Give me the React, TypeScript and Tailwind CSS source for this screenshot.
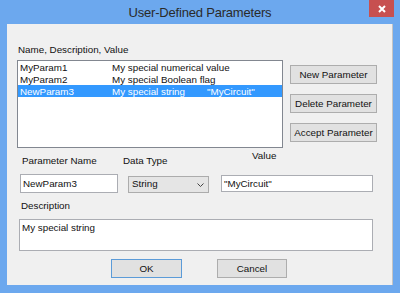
import React from 'react';

const rows = [
  { name: 'MyParam1', desc: 'My special numerical value', value: '' },
  { name: 'MyParam2', desc: 'My special Boolean flag', value: '' },
  { name: 'NewParam3', desc: 'My special string', value: '"MyCircuit"' },
];

const Btn: React.FC<{ label: string; className?: string }> = ({ label, className }) => (
  <button
    className={`h-[19px] border bg-[#e1e1e1] text-[9.8px] text-[#111] leading-none flex items-center justify-center ${className ?? 'border-[#adadad]'}`}
  >
    {label}
  </button>
);

const App: React.FC = () => {
  return (
    <div className="w-[400px] h-[293px] bg-[#6ca8ee] flex flex-col font-['Liberation_Sans',Arial,sans-serif] text-[9.8px] text-[#111] overflow-hidden">
      {/* Title bar */}
      <div className="h-[24px] grid grid-cols-[1fr_auto_1fr] items-start">
        <div />
        <div className="text-[13px] leading-[25px] text-[#2a2a2a] tracking-[-0.2px]">User-Defined Parameters</div>
        <div className="justify-self-end mr-[6px] w-[25px] h-[17px] bg-[#c75050] flex items-center justify-center">
          <svg width="8" height="8" viewBox="0 0 8 8">
            <path d="M1 1 L7 7 M7 1 L1 7" stroke="#fff" strokeWidth="2" />
          </svg>
        </div>
      </div>

      {/* Client area */}
      <div className="mx-[7px] mb-[8px] flex-1 bg-[#f0f0f0] border-r border-[#c4c4c4] flex flex-col">
        <div className="ml-[11px] mt-[20px] h-[12px] leading-[12px]">Name, Description, Value</div>

        <div className="flex mt-[4px] ml-[10px]">
          <div className="w-[266px] h-[88px] bg-white border border-[#828790] pt-[0px]">
            {rows.map((r, i) => (
              <div
                key={r.name}
                className={`h-[12px] leading-[13px] flex whitespace-nowrap ${i === 2 ? 'bg-[#3399ff] text-white' : ''}`}
              >
                <span className="w-[94px] pl-[2px] shrink-0">{r.name}</span>
                <span className="w-[95px] shrink-0">{r.desc}</span>
                <span>{r.value}</span>
              </div>
            ))}
          </div>
          <div className="ml-[7px] mt-[5px] flex flex-col gap-[10px] w-[87px]">
            <Btn label="New Parameter" />
            <Btn label="Delete Parameter" />
            <Btn label="Accept Parameter" />
          </div>
        </div>

        {/* Name / type / value row */}
        <div className="flex mt-[1px]">
          <div className="ml-[13px] w-[98px] flex flex-col">
            <div className="mt-[6px] ml-[2px] h-[12px] leading-[12px]">Parameter Name</div>
            <div className="mt-[7px] h-[19px] bg-white border border-[#abadb3] leading-[17px] pl-[2px]">NewParam3</div>
          </div>
          <div className="ml-[10px] w-[81px] flex flex-col">
            <div className="mt-[6px] ml-[-5px] h-[12px] leading-[12px]">Data Type</div>
            <div className="mt-[9px] h-[17px] bg-[#e5e5e5] border border-[#acacac] flex items-center justify-between pl-[3px] pr-[4px]">
              <span>String</span>
              <svg width="7" height="4" viewBox="0 0 7 4">
                <path d="M0.5 0.5 L3.5 3.5 L6.5 0.5" stroke="#444" strokeWidth="1" fill="none" />
              </svg>
            </div>
          </div>
          <div className="ml-[12px] w-[152px] flex flex-col">
            <div className="mt-[1px] ml-[31px] h-[12px] leading-[12px]">Value</div>
            <div className="mt-[13px] h-[17px] bg-white border border-[#abadb3] leading-[15px] pl-[2px]">"MyCircuit"</div>
          </div>
        </div>

        <div className="ml-[14px] mt-[7px] h-[12px] leading-[12px]">Description</div>
        <div className="ml-[12px] mt-[7px] w-[354px] h-[32px] bg-white border border-[#abadb3] pl-[2px] pt-[2px] leading-[12px]">
          My special string
        </div>

        <div className="flex justify-center gap-[35px] mt-[8px] pr-[1px]">
          <Btn label="OK" className="w-[71px] border-[#5b9bd8]" />
          <Btn label="Cancel" className="w-[70px] border-[#adadad]" />
        </div>
      </div>
    </div>
  );
};

export default App;
